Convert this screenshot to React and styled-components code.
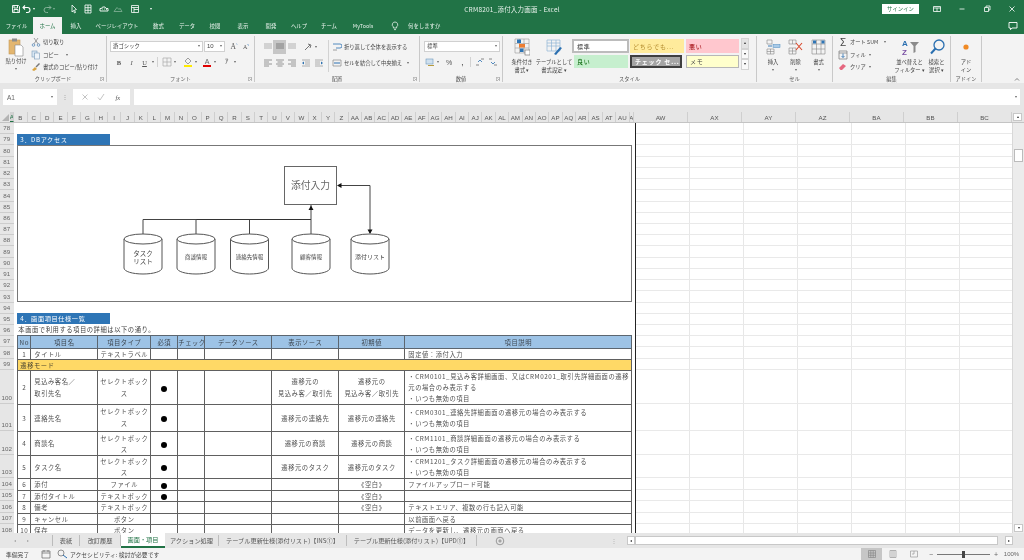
import React from "react";
import styled, { createGlobalStyle } from "styled-components";

const JP = `"Noto Sans CJK JP", "Noto Sans", sans-serif`;

const Global = createGlobalStyle`
  html, body { margin: 0; width: 1024px; height: 560px; overflow: hidden; background: #e6e6e6; }
  #root { width: 1024px; height: 560px; }
  * { box-sizing: border-box; }
`;

const Window = styled.div`
  width: 1024px; height: 560px; display: flex; flex-direction: column; overflow: hidden;
  font-family: ${JP}; color: #444; filter: blur(0.4px); background: #e6e6e6;
`;

/* Title bar */
const TitleBar = styled.header`
  height: 17px; background: #217346; color: #fff; display: grid; grid-template-columns: 1fr auto 1fr; align-items: center;
`;
const Qat = styled.div`display: flex; align-items: center; padding-left: 10px;`;
const QatSlot = styled.span`
  width: ${p => p.$w}px; display: flex; align-items: center; justify-content: center; opacity: ${p => p.$dim ? 0.45 : 1};
`;
const TitleText = styled.div`font-size: 6.5px; letter-spacing: 0.2px; color: #e8f2ec; white-space: nowrap;`;
const WinControls = styled.div`display: flex; justify-content: flex-end; align-items: center;`;
const SignIn = styled.div`
  width: 37px; height: 10px; background: #fff; color: #217346; font-size: 5.4px; display: flex; align-items: center; justify-content: center; margin-right: 5px;
`;
const WinBtn = styled.span`width: 25px; display: flex; justify-content: center; align-items: center;`;

/* Tabs */
const TabBar = styled.nav`height: 17px; background: #217346; display: flex; align-items: stretch; color: #e8f2ec; font-size: 5.4px;`;
const Tab = styled.div`
  width: ${p => p.$w}px; display: flex; align-items: center; justify-content: center; white-space: nowrap;
  background: ${p => p.$active ? "#f3f3f3" : "transparent"}; color: ${p => p.$active ? "#217346" : "inherit"};
`;
const TellMe = styled.div`display: flex; align-items: center; gap: 8px; padding-left: 9px;`;
const CommentSlot = styled.div`margin-left: auto; padding-right: 6px; display: flex; align-items: center;`;

/* Ribbon */
const Ribbon = styled.section`height: 49px; background: #f3f3f3; display: flex; font-size: 5.3px; color: #444; white-space: nowrap;`;
const Group = styled.div`
  width: ${p => p.$w}px; margin: 2px 0 1px; border-right: 1px solid #c9c9c9; display: grid; grid-template-rows: 1fr 7px; position: relative;
`;
const GroupBody = styled.div`display: flex; padding: ${p => p.$pad || "1px 0 0 4px"}; min-height: 0;`;
const GroupLabel = styled.div`font-size: 5.2px; text-align: center; line-height: 7px; color: #555;`;
const Launcher = styled.svg`position: absolute; right: 2px; bottom: 1px; width: 4px; height: 4px;`;
const Expand = styled.div`flex: 1; display: flex; align-items: flex-end; justify-content: flex-end; padding: 0 4px 2px 0;`;

const Caret = styled.i`
  display: inline-block; width: 0; height: 0; margin-left: ${p => p.$ml ?? 3}px; border: 1.8px solid transparent; border-top: 2.2px solid #666; border-bottom: 0; flex: none;
`;

const PasteCol = styled.div`width: 24px; display: flex; flex-direction: column; align-items: center; margin-right: 3px;`;
const BigLabel = styled.div`line-height: 8px; text-align: center; margin-top: ${p => p.$mt ?? 1}px;`;
const SmallList = styled.div`display: flex; flex-direction: column; gap: ${p => p.$gap ?? 2}px;`;
const SmallRow = styled.div`height: 10.5px; display: flex; align-items: center; gap: ${p => p.$gap ?? 2}px;`;

const Stack = styled.div`display: flex; flex-direction: column; gap: ${p => p.$gap ?? 4}px; padding-top: ${p => p.$top ?? 4}px;`;
const Line = styled.div`display: flex; align-items: center; height: ${p => p.$h ?? 12}px;`;
const Field = styled.div`
  width: ${p => p.$w}px; height: 11px; background: #fff; border: 1px solid #d0d0d0; display: flex; align-items: center; justify-content: space-between; padding: 0 2px 0 2px; margin-right: ${p => p.$mr ?? 1}px; font-size: 5.4px;
`;
const Glyph = styled.span`
  width: ${p => p.$w ?? 12}px; text-align: center; font-family: "Liberation Serif", serif; font-size: ${p => p.$s ?? 6.5}px; font-weight: ${p => p.$bold ? 700 : 400};
  font-style: ${p => p.$it ? "italic" : "normal"}; text-decoration: ${p => p.$u ? "underline" : "none"}; color: #555; flex: none;
`;
const IconBtn = styled.span`
  width: ${p => p.$w ?? 11}px; height: ${p => p.$h ?? 12}px; display: flex; align-items: center; justify-content: center; flex: none; background: ${p => p.$on ? "#c6c6c6" : "transparent"};
`;
const VRule = styled.span`width: 1px; height: ${p => p.$h ?? 30}px; background: #d2d2d2; margin: 0 ${p => p.$m ?? 4}px; flex: none;`;

const BigBtn = styled.div`width: ${p => p.$w}px; display: flex; flex-direction: column; align-items: center; flex: none;`;
const IconBox = styled.div`height: 20px; display: flex; align-items: center; justify-content: center;`;

const Gallery = styled.div`
  display: grid; grid-template-columns: 57px 56px 55px; grid-auto-rows: 14px; margin-left: 1px; padding-top: 2px; row-gap: 1px; font-size: 6px;
`;
const Style = styled.div`
  margin: ${p => p.$m || "0 1px"}; display: flex; align-items: center; padding-left: 3px; letter-spacing: 0.8px; overflow: hidden;
  background: ${p => p.$bg}; color: ${p => p.$c}; border: ${p => p.$b || "0"}; font-weight: ${p => p.$bold ? 700 : 400};
`;
const GalleryArrows = styled.div`display: flex; flex-direction: column; margin-left: 1px; padding-top: 1px; width: 8px;`;
const ArrowBtn = styled.div`flex: none; height: 10.5px; background: ${p => p.$dim ? "#e4e4e4" : "#fafafa"}; border: 1px solid #d4d4d4; display: flex; justify-content: center; align-items: center;`;

/* Formula bar */
const GapBar = styled.div`height: ${p => p.$h}px; background: #e6e6e6;`;
const FormulaBar = styled.div`height: 17px; background: #e6e6e6; display: flex; padding: 0 4px 1px 3px;`;
const NameBox = styled.div`
  width: 54px; background: #fff; display: flex; align-items: center; justify-content: space-between; padding: 0 4px; font-family: "Liberation Sans", sans-serif; font-size: 6.5px; color: #666;
`;
const Dots = styled.span`width: 16px; text-align: center; color: #999; font-size: 6px; line-height: 16px;`;
const FxBox = styled.div`width: 57px; background: #fff; display: flex; align-items: center; justify-content: space-around; padding: 0 4px; margin-right: 4px;`;
const FormulaInput = styled.div`flex: 1; background: #fff; display: flex; justify-content: flex-end; align-items: center; padding-right: 3px;`;

/* Column headers */
const ColHeaders = styled.div`height: 11px; display: flex; background: #e6e6e6; font-family: "Liberation Sans", sans-serif; font-size: 6.2px; color: #555; border-bottom: 1px solid #c4c4c4;`;
const Corner = styled.div`width: 13.5px; position: relative;`;
const CornerMark = styled.svg`position: absolute; right: 1px; bottom: 1px; width: 7px; height: 7px;`;
const ColCell = styled.div`
  width: ${p => p.$w}px; flex: none; display: flex; align-items: center; justify-content: center; overflow: hidden; border-right: 1px solid #cfcfcf;
  background: ${p => p.$on ? "#d2d2d2" : "transparent"}; color: ${p => p.$on ? "#217346" : "inherit"}; border-bottom: ${p => p.$on ? "1px solid #217346" : "0"};
`;
const ColFill = styled.div`flex: 1; display: flex; justify-content: center; align-items: flex-start;`;

/* Sheet */
const SheetBody = styled.main`height: 410px; display: flex; overflow: hidden; background: #fff;`;
const RowHeaders = styled.div`width: 13.5px; flex: none; background: #e6e6e6; display: flex; flex-direction: column;`;
const RowHead = styled.div`
  height: ${p => p.$h}px; flex: none; display: flex; justify-content: center; align-items: flex-end; line-height: 10px; border-bottom: 1px solid #cdcdcd; font-family: "Liberation Sans", sans-serif; font-size: 6.2px; color: #666;
`;
const Content = styled.div`width: 621.5px; flex: none; padding-left: 3.8px; background: #fff; display: flex; flex-direction: column;`;
const Spacer = styled.div`height: ${p => p.$h}px; flex: none;`;
const SectionTitle = styled.div`
  width: 93px; height: 11.2px; flex: none; background: #2e75b6; color: #fff; font-size: 6.2px; letter-spacing: 0.6px; padding-left: 3px; line-height: 11.2px;
`;
const DiagramBox = styled.div`width: 615px; height: 157px; flex: none; border: 1px solid #777; background: #fff;`;
const Diagram = styled.svg`display: block; width: 613px; height: 155px; font-family: ${JP};`;
const Note = styled.div`height: 11.2px; flex: none; font-size: 6.3px; letter-spacing: 0.55px; line-height: 11.2px; padding-left: 1px; color: #444; white-space: nowrap;`;

const Table = styled.table`
  width: 614px; table-layout: fixed; border-collapse: collapse; font-size: 6.3px; letter-spacing: 0.55px; color: #505050; flex: none;
`;
const Col = styled.col`width: ${p => p.$w}px;`;
const Tr = styled.tr`height: ${p => p.$h}px;`;
const Th = styled.th`
  background: #9dc3e6; border: 1px solid #5c6670; font-weight: 400; color: #3d4650; padding: 0; line-height: 9px; overflow: hidden; white-space: nowrap; text-align: center;
`;
const Td = styled.td`
  border: 1px solid #606060; padding: 0 ${p => p.$left ? "2px" : 0} 0 ${p => p.$left ? "3px" : 0}; line-height: ${p => p.$lh ?? 9}px; overflow: hidden; white-space: nowrap;
  text-align: ${p => p.$left ? "left" : "center"}; vertical-align: middle;
`;
const Band = styled.td`background: #ffd966; border: 1px solid #606060; padding: 0 0 0 2px; line-height: 9px; color: #4a4430;`;
const Dot = styled.span`display: inline-block; width: 6px; height: 6px; border-radius: 50%; background: #000; vertical-align: middle;`;

const RightPanel = styled.div`
  flex: 1; border-left: 1.5px solid #222; background: #fff repeating-linear-gradient(90deg, transparent 0 53px, #e7e7e7 53px 54px); display: flex; flex-direction: column;
`;
const GridRow = styled.div`height: ${p => p.$h}px; flex: none; border-bottom: 1px solid #e9e9e9;`;

const VScroll = styled.aside`width: 12px; flex: none; background: #ececec; position: relative; border-left: 1px solid #d8d8d8;`;
const ScrollThumb = styled.div`position: absolute; left: 1px; right: 1px; top: 26px; height: 13px; background: #fff; border: 1px solid #bbb;`;
const ScrollBtn = styled.div`
  position: absolute; left: 1px; width: 9px; height: 8px; background: #fff; border: 1px solid #c8c8c8; display: flex; align-items: center; justify-content: center;
  ${p => p.$bottom ? "bottom: 1px;" : "top: 0;"}
`;
const ColScrollCap = styled.div`width: 12px; flex: none; position: relative; background: #e6e6e6;`;
const Arrow = styled.i`
  width: 0; height: 0; display: block; border: 1.6px solid transparent;
  ${p => ({ up: "border-bottom: 2px solid #333; border-top: 0;", down: "border-top: 2px solid #333; border-bottom: 0;", left: "border-right: 2px solid #333; border-left: 0;", right: "border-left: 2px solid #333; border-right: 0;" }[p.$d])}
`;

/* Sheet tabs */
const SheetTabs = styled.div`height: 15px; background: #e6e6e6; display: flex; align-items: stretch; font-size: 6.2px; color: #555; white-space: nowrap;`;
const TabNav = styled.div`width: 53px; flex: none; display: flex; align-items: center; gap: 11px; padding-left: 14px; border-right: 1px solid #bbb; margin: 2px 0;`;
const SheetTab = styled.div`
  width: ${p => p.$w}px; flex: none; display: flex; align-items: center; justify-content: center; overflow: hidden;
  ${p => p.$active ? "background:#fff;color:#217346;border-bottom:2px solid #217346;" : "border-right: 1px solid #bdbdbd; margin: 2px 0;"}
`;
const AddSlot = styled.div`width: 46px; flex: none; display: flex; align-items: center; justify-content: center;`;
const HDots = styled.div`width: 104px; flex: none; display: flex; align-items: center; justify-content: center; padding-left: 78px; color: #aaa; font-size: 6px;`;
const HScroll = styled.div`flex: 1; display: flex; align-items: center; gap: 0; padding-right: 11px;`;
const HBtn = styled.div`width: 8px; height: 9px; flex: none; background: #fff; border: 1px solid #c8c8c8; display: flex; align-items: center; justify-content: center;`;
const HTrack = styled.div`flex: 1; height: 9px; background: #fff; border: 1px solid #c8c8c8;`;
const HGap = styled.div`width: 7px; flex: none;`;

/* Status */
const StatusBar = styled.footer`height: 12px; background: #f3f3f3; display: flex; align-items: center; font-size: 5.8px; color: #444; padding-left: 6px; white-space: nowrap;`;
const StatusText = styled.span`width: ${p => p.$w}px; flex: none;`;
const StatusRight = styled.div`margin-left: auto; display: flex; align-items: center; height: 100%;`;
const ViewBtn = styled.div`width: 21px; height: 100%; display: flex; align-items: center; justify-content: center; background: ${p => p.$on ? "#c6c6c6" : "transparent"};`;
const ZoomTrack = styled.div`width: 53px; height: 1px; background: #777; position: relative; margin: 0 3px;`;
const ZoomThumb = styled.div`position: absolute; left: 25px; top: -3px; width: 2.5px; height: 7px; background: #444;`;
const ZoomSign = styled.span`font-family: "Liberation Sans", sans-serif; font-size: 7px; color: #666; width: 6px; text-align: center;`;
const ZoomPct = styled.span`font-family: "Liberation Sans", sans-serif; font-size: 6px; color: #666; width: 25px; text-align: center;`;

/* Icons */
const S = ({ w = 10, h = 10, vb, children }) => <svg width={w} height={h} viewBox={vb || `0 0 ${w} ${h}`} fill="none">{children}</svg>;

const Align = ({ rows, c = "#8a8a8a" }) => (
  <S>{rows.map(([x, l], i) => <line key={i} x1={x} x2={x + l} y1={2 + i * 2} y2={2 + i * 2} stroke={c} strokeWidth="0.9" />)}</S>
);
const lines = {
  top: [[1, 8], [1, 8], [1, 8]],
  left: [[1, 8], [1, 5], [1, 8], [1, 5]],
  mid: [[1, 8], [2.5, 5], [1, 8], [2.5, 5]],
  right: [[1, 8], [4, 5], [1, 8], [4, 5]],
};
const Launch = () => <Launcher viewBox="0 0 4 4" fill="none"><path d="M.3 .3h3.2v3.2M.3 .3v3.2h1.6M1.5 1.5l2 2" stroke="#777" strokeWidth=".5" /></Launcher>;

const rowHeights = [];
const rowLabels = [];
for (let i = 78; i <= 99; i++) { rowLabels.push(i); rowHeights.push(11.23); }
[[100, 34], [101, 27], [102, 24], [103, 23], [104, 12], [105, 11], [106, 12], [107, 11], [108, 12]].forEach(([n, h]) => { rowLabels.push(n); rowHeights.push(h); });

const colNames = [];
const alpha = "ABCDEFGHIJKLMNOPQRSTUVWXYZ";
for (let i = 1; i < 26; i++) colNames.push(alpha[i]);
for (let i = 0; i < 21; i++) colNames.push("A" + alpha[i]);

const cylinders = [
  { x: 143, t: ["タスク", "リスト"], fs: 6.5 },
  { x: 196, t: ["商談情報"], fs: 5.5 },
  { x: 249.5, t: ["連絡先情報"], fs: 5.5 },
  { x: 311, t: ["顧客情報"], fs: 5.5 },
  { x: 370, t: ["添付リスト"], fs: 6 },
];

const Cylinder = ({ x, t, fs }) => (
  <g>
    <path d={`M${x - 19} 240v29c0 3.5 8.5 6 19 6s19 -2.5 19 -6v-29`} stroke="#555" fill="#fff" />
    <ellipse cx={x} cy={240} rx={19} ry={5} stroke="#555" fill="#fff" />
    {t.map((s, i) => (
      <text key={i} x={x} y={t.length === 2 ? 256.5 + i * 8 : 260} textAnchor="middle" fontSize={fs} fill="#444">{s}</text>
    ))}
  </g>
);

const desc = (code) => <>・{code}の遷移元の場合のみ表示する<br />・いつも無効の項目</>;

const rightCols = ["AX", "AY", "AZ", "BA", "BB", "BC"];

export default function App() {
  return (
    <Window>
      <Global />
      <TitleBar>
        <Qat>
          <QatSlot $w={11}><S><path d="M1.5 1.5h6l1 1v6h-7z M3 1.5v2.5h3.5v-2.5 M3 8.5v-3h4v3" stroke="#fff" strokeWidth=".9" /></S></QatSlot>
          <QatSlot $w={14}><S><path d="M3 1.5L1 3.5l2 2M1 3.5h4.5a2.5 2.5 0 0 1 0 5H4" stroke="#fff" strokeWidth="1.1" /></S><Caret $ml={1} style={{ borderTopColor: "#fff" }} /></QatSlot>
          <QatSlot $w={6} />
          <QatSlot $w={15} $dim><S><path d="M7 1.5L9 3.5l-2 2M9 3.5H4.5a2.5 2.5 0 0 0 0 5H6" stroke="#fff" strokeWidth="1" /></S><Caret $ml={1} style={{ borderTopColor: "#fff" }} /></QatSlot>
          <QatSlot $w={12} />
          <QatSlot $w={11}><S><path d="M3 1l4.5 4.5L5.5 6l1 2.5-1 .5-1-2.5L3 8z" stroke="#fff" strokeWidth=".8" /></S></QatSlot>
          <QatSlot $w={17}><S><path d="M2 1h6v8H2zM2 3.7h6M2 6.3h6M5 1v8" stroke="#fff" strokeWidth=".8" /></S></QatSlot>
          <QatSlot $w={15}><S><path d="M1 7h8V4.5H7L6 3H3.5L2.5 4.5H1zM3 5h.8M5 5h.8M7 5.5h.8" stroke="#fff" strokeWidth=".9" /></S></QatSlot>
          <QatSlot $w={14} $dim><S><path d="M1 7.5l3-4 2 2 1-1.2 2 3.2z" stroke="#fff" strokeWidth=".8" /></S></QatSlot>
          <QatSlot $w={20}><S><path d="M1.5 1.5h7v7h-7zM1.5 3.5h7M4 3.5v5M4 5.5h4.5" stroke="#fff" strokeWidth=".8" /></S></QatSlot>
          <QatSlot $w={11}><Caret $ml={0} style={{ borderTopColor: "#fff" }} /></QatSlot>
        </Qat>
        <TitleText>CRM8201_添付入力画面 - Excel</TitleText>
        <WinControls>
          <SignIn>サインイン</SignIn>
          <WinBtn><S><path d="M1.5 2.5h7v5h-7zM1.5 4h7M5 4v3.5" stroke="#fff" strokeWidth=".8" /></S></WinBtn>
          <WinBtn><S><path d="M2.5 5h5" stroke="#fff" strokeWidth=".8" /></S></WinBtn>
          <WinBtn><S><path d="M2.5 3.5h4v4h-4zM4 3.5V2h4v4H6.5" stroke="#fff" strokeWidth=".8" /></S></WinBtn>
          <WinBtn><S><path d="M2.5 2.5l5 5M7.5 2.5l-5 5" stroke="#fff" strokeWidth=".8" /></S></WinBtn>
        </WinControls>
      </TitleBar>

      <TabBar>
        <Tab $w={33}>ファイル</Tab>
        <Tab $w={29} $active>ホーム</Tab>
        <Tab $w={28}>挿入</Tab>
        <Tab $w={54}>ページレイアウト</Tab>
        <Tab $w={29}>数式</Tab>
        <Tab $w={28}>データ</Tab>
        <Tab $w={28}>校閲</Tab>
        <Tab $w={28}>表示</Tab>
        <Tab $w={28}>開発</Tab>
        <Tab $w={28}>ヘルプ</Tab>
        <Tab $w={32}>チーム</Tab>
        <Tab $w={36}>MyTools</Tab>
        <TellMe>
          <S><path d="M5 1a2.7 2.7 0 0 0-1.6 4.9V7h3.2V5.9A2.7 2.7 0 0 0 5 1zM4 8.6h2" stroke="#e8f2ec" strokeWidth=".8" /></S>
          何をしますか
        </TellMe>
        <CommentSlot><S><path d="M1 1.5h8v5.5H4L2.5 8.7V7H1z" stroke="#fff" strokeWidth=".9" /></S></CommentSlot>
      </TabBar>

      <Ribbon>
        <Group $w={107}>
          <GroupBody>
            <PasteCol>
              <S w={18} h={20}><rect x="2" y="3" width="11" height="14" fill="#e3b66f" stroke="#c59b58" strokeWidth=".6" /><rect x="5" y="1.5" width="5" height="3" fill="#8d8d8d" /><path d="M8 8h6l2 2v9H8z" fill="#fff" stroke="#888" strokeWidth=".6" /></S>
              <BigLabel $mt={0}>貼り付け</BigLabel>
              <Caret $ml={0} style={{ marginTop: 3 }} />
            </PasteCol>
            <SmallList>
              <SmallRow><S><circle cx="2.5" cy="8" r="1.3" stroke="#4a7fb5" strokeWidth=".7" /><circle cx="7.5" cy="8" r="1.3" stroke="#4a7fb5" strokeWidth=".7" /><path d="M3 6.8L7 1M7 6.8L3 1" stroke="#777" strokeWidth=".7" /></S>切り取り</SmallRow>
              <SmallRow><S><rect x="1" y="1" width="5" height="6" fill="#d7e6f3" stroke="#7a9cba" strokeWidth=".6" /><rect x="3.5" y="3" width="5" height="6" fill="#eef4fa" stroke="#7a9cba" strokeWidth=".6" /></S>コピー<Caret $ml={5} /></SmallRow>
              <SmallRow><S><path d="M1 8l3-3 2 2-3 2z" fill="#d9a441" /><path d="M4.5 4.5L8 1l1 1-3.5 3.5z" fill="#777" /></S>書式のコピー/貼り付け</SmallRow>
            </SmallList>
          </GroupBody>
          <GroupLabel>クリップボード</GroupLabel>
          <Launch />
        </Group>

        <Group $w={148}>
          <GroupBody $pad="0 0 0 3px">
            <Stack>
              <Line>
                <Field $w={93}>游ゴシック<Caret /></Field>
                <Field $w={21} $mr={3} style={{ fontFamily: "Liberation Sans", fontSize: 6 }}>10<Caret /></Field>
                <Glyph $s={7.5} $w={12}>A<sup style={{ fontSize: 3, color: "#2a6fb0" }}>^</sup></Glyph>
                <Glyph $s={6} $w={12}>A<sup style={{ fontSize: 3, color: "#2a6fb0" }}>v</sup></Glyph>
              </Line>
              <Line>
                <Glyph $w={3} />
                <Glyph $bold $w={12}>B</Glyph>
                <Glyph $it $w={13}>I</Glyph>
                <Glyph $u $w={13}>U</Glyph><Caret $ml={1} />
                <VRule $h={10} $m={3} />
                <IconBtn><S><path d="M1 1h8v8H1zM1 5h8M5 1v8" stroke="#aaa" strokeWidth=".7" /></S></IconBtn>
                <Caret $ml={2} />
                <IconBtn $w={13} style={{ marginLeft: 5 }}><S><path d="M5 1l3 3-3 3-3-3z" stroke="#777" strokeWidth=".7" /><rect x="1" y="8" width="8" height="2" fill="#ffeb00" /></S></IconBtn>
                <Caret $ml={1} />
                <IconBtn $w={13} style={{ marginLeft: 3 }}><S><text x="5" y="6.5" textAnchor="middle" fontSize="7" fill="#666" fontFamily="Liberation Sans">A</text><rect x="1" y="8" width="8" height="2" fill="#e00000" /></S></IconBtn>
                <Caret $ml={1} />
                <IconBtn $w={12} style={{ marginLeft: 5 }}><S><text x="5" y="7" textAnchor="middle" fontSize="6.5" fill="#666" fontFamily="Liberation Sans">ｱ</text></S></IconBtn>
                <Caret $ml={1} />
              </Line>
            </Stack>
          </GroupBody>
          <GroupLabel>フォント</GroupLabel>
          <Launch />
        </Group>

        <Group $w={165}>
          <GroupBody $pad="0 0 0 7px">
            <Stack $gap={2} $top={4}>
              <Line $h={14}>
                <IconBtn $w={11}><Align rows={lines.top} c="#aaa" /></IconBtn>
                <IconBtn $w={13} $h={14} $on><Align rows={lines.top} c="#777" /></IconBtn>
                <IconBtn $w={11}><Align rows={lines.top} c="#aaa" /></IconBtn>
                <IconBtn $w={15} style={{ marginLeft: 3 }}><S><path d="M2 8L7 3M5 2l3 1-1 3" stroke="#666" strokeWidth=".9" /></S></IconBtn>
                <Caret $ml={0} />
              </Line>
              <Line $h={14}>
                <IconBtn $w={11}><Align rows={lines.left} /></IconBtn>
                <IconBtn $w={13} $h={14}><Align rows={lines.mid} /></IconBtn>
                <IconBtn $w={11}><Align rows={lines.right} /></IconBtn>
                <IconBtn $w={12} style={{ marginLeft: 3 }}><S><path d="M1 2h8M4 4h5M4 6h5M1 8h8" stroke="#999" strokeWidth=".8" /><path d="M3 3.5L1 5l2 1.5z" fill="#2a6fb0" /></S></IconBtn>
                <IconBtn $w={13}><S><path d="M1 2h8M1 4h5M1 6h5M1 8h8" stroke="#999" strokeWidth=".8" /><path d="M7 3.5L9 5 7 6.5z" fill="#2a6fb0" /></S></IconBtn>
              </Line>
            </Stack>
            <VRule $h={32} $m={3} style={{ marginTop: 4 }} />
            <Stack $gap={5} $top={5}>
              <Line $h={11}><S><path d="M1 2h7a2 2 0 0 1 0 4H4" stroke="#2a6fb0" strokeWidth=".8" /><path d="M1 8h4" stroke="#888" strokeWidth=".8" /></S><span style={{ marginLeft: 2 }}>折り返して全体を表示する</span></Line>
              <Line $h={11}><S><path d="M1 2h8v6H1z" stroke="#888" strokeWidth=".7" /><path d="M2 5h6" stroke="#2a6fb0" strokeWidth="1" /></S><span style={{ marginLeft: 2 }}>セルを結合して中央揃え</span><Caret $ml={5} /></Line>
            </Stack>
          </GroupBody>
          <GroupLabel>配置</GroupLabel>
          <Launch />
        </Group>

        <Group $w={83}>
          <GroupBody $pad="0 0 0 4px">
            <Stack>
              <Line><Field $w={76} $mr={0}>標準<Caret /></Field></Line>
              <Line>
                <IconBtn $w={12}><S><rect x="1" y="2" width="7" height="5" fill="#cfe0ef" stroke="#6f99bd" strokeWidth=".6" /><path d="M3 8.5h6" stroke="#b89b3e" strokeWidth="1" /></S></IconBtn>
                <Caret $ml={1} />
                <Glyph $w={16} $s={7} style={{ fontFamily: "Liberation Sans", marginLeft: 2 }}>%</Glyph>
                <Glyph $w={11} $bold style={{ fontFamily: "Liberation Sans" }}>,</Glyph>
                <VRule $h={10} $m={2} />
                <IconBtn $w={13}><S><path d="M1 8h3M6 2h3" stroke="#888" strokeWidth="1" /><path d="M3 5l2-2 2 2" stroke="#2a6fb0" strokeWidth=".8" /></S></IconBtn>
                <IconBtn $w={13}><S><path d="M1 2h3M6 8h3" stroke="#888" strokeWidth="1" /><path d="M3 5l2 2 2-2" stroke="#2a6fb0" strokeWidth=".8" /></S></IconBtn>
              </Line>
            </Stack>
          </GroupBody>
          <GroupLabel>数値</GroupLabel>
          <Launch />
        </Group>

        <Group $w={254}>
          <GroupBody $pad="1px 0 0 4px">
            <BigBtn $w={30}>
              <IconBox>
                <S w={16} h={18}><path d="M1 1h14v14H1zM1 5.5h14M1 10h14M5.5 1v14M10 1v14" stroke="#999" strokeWidth=".6" /><rect x="3" y="1.5" width="4" height="3.5" fill="#2f75b5" /><rect x="5" y="6" width="6" height="3.5" fill="#ed7d31" /><rect x="6" y="10.5" width="3.5" height="3.5" fill="#2f75b5" /><rect x="11" y="12" width="5" height="5" fill="#fff" stroke="#666" strokeWidth=".6" /></S>
              </IconBox>
              <BigLabel $mt={1}>条件付き<br />書式 ▾</BigLabel>
            </BigBtn>
            <BigBtn $w={34}>
              <IconBox>
                <S w={16} h={18}><path d="M1 2h13v11H1zM1 5h13M1 8h13M5.5 2v11M10 2v11" stroke="#8fb4d6" strokeWidth=".7" /><path d="M8 16l6-7 2 1-6 7z" fill="#2a6fb0" /></S>
              </IconBox>
              <BigLabel $mt={1}>テーブルとして<br />書式設定 ▾</BigLabel>
            </BigBtn>
            <Gallery>
              <Style $bg="#fff" $c="#333" $b="2px solid #bcbcbc" $m="0">標準</Style>
              <Style $bg="#ffeb9c" $c="#b28a2c">どちらでも...</Style>
              <Style $bg="#ffc7ce" $c="#9c0006">悪い</Style>
              <Style $bg="#c6efce" $c="#006100" $m="1px 1px 0 2px">良い</Style>
              <Style $bg="#a5a5a5" $c="#fff" $b="2px solid #3f3f3f" $bold $m="1px 3px 0 1px">チェック セ...</Style>
              <Style $bg="#ffffcc" $c="#444" $b="1px solid #b7b7b7" $m="1px 1px 0 1px">メモ</Style>
            </Gallery>
            <GalleryArrows>
              <ArrowBtn $dim><Arrow $d="up" /></ArrowBtn>
              <ArrowBtn><Arrow $d="down" /></ArrowBtn>
              <ArrowBtn><Arrow $d="down" /></ArrowBtn>
            </GalleryArrows>
          </GroupBody>
          <GroupLabel>スタイル</GroupLabel>
        </Group>

        <Group $w={76}>
          <GroupBody $pad="1px 0 0 5px">
            <BigBtn $w={22}>
              <IconBox><S w={15} h={16}><path d="M1 1h5v4H1zM1 10h7v5H1zM4.5 10v5M1 12.5h7" stroke="#888" strokeWidth=".6" /><rect x="7" y="5.5" width="7" height="3" fill="#a9cbe8" stroke="#4a8ac0" strokeWidth=".5" /><path d="M6 7H2" stroke="#2a6fb0" strokeWidth=".9" /></S></IconBox>
              <BigLabel $mt={1}>挿入</BigLabel><Caret $ml={0} style={{ marginTop: 3 }} />
            </BigBtn>
            <BigBtn $w={23}>
              <IconBox><S w={16} h={16}><path d="M1 1h7v4H1zM1 9h7v6H1zM4.5 1v4M4.5 9v6M1 12h7" stroke="#888" strokeWidth=".6" /><path d="M8 4l6 7M14 4l-6 7" stroke="#d9472b" strokeWidth="1.1" /></S></IconBox>
              <BigLabel $mt={1}>削除</BigLabel><Caret $ml={0} style={{ marginTop: 3 }} />
            </BigBtn>
            <BigBtn $w={23}>
              <IconBox><S w={15} h={16}><path d="M1 1h13v14H1zM1 5h13M1 10h13M5.5 1v14M10 1v14" stroke="#888" strokeWidth=".6" /><rect x="2" y="1.5" width="3" height="3" fill="#2f75b5" /><rect x="10.5" y="1.5" width="3" height="3" fill="#2f75b5" /></S></IconBox>
              <BigLabel $mt={1}>書式</BigLabel><Caret $ml={0} style={{ marginTop: 3 }} />
            </BigBtn>
          </GroupBody>
          <GroupLabel>セル</GroupLabel>
        </Group>

        <Group $w={118}>
          <GroupBody $pad="1px 0 0 5px">
            <SmallList style={{ width: 56 }}>
              <SmallRow><Glyph $w={10} $s={10} style={{ fontFamily: "Liberation Sans", color: "#444" }}>Σ</Glyph>オート SUM<Caret $ml={4} /></SmallRow>
              <SmallRow><S><path d="M1 1h8v8H1zM1 3h8" stroke="#777" strokeWidth=".7" /><path d="M5 3.5v4M3.5 6L5 7.5 6.5 6" stroke="#2a6fb0" strokeWidth=".8" /></S>フィル<Caret $ml={1} /></SmallRow>
              <SmallRow><S><path d="M1 6l4-4 3 2-4 4H2.500z" fill="#e5677f" /></S>クリア<Caret $ml={1} /></SmallRow>
            </SmallList>
            <BigBtn $w={29} style={{ marginLeft: 1 }}>
              <IconBox><S w={20} h={18} ><text x="2" y="8" fontSize="8" fill="#2a6fb0" fontWeight="700" fontFamily="Liberation Sans">A</text><text x="2" y="16.5" fontSize="8" fill="#7a4fa3" fontWeight="700" fontFamily="Liberation Sans">Z</text><path d="M10 4h9l-3.500 4v6l-2 1V8z" fill="#8a8a8a" /></S></IconBox>
              <BigLabel $mt={1}>並べ替えと<br />フィルター ▾</BigLabel>
            </BigBtn>
            <BigBtn $w={25}>
              <IconBox><S w={16} h={18}><circle cx="10" cy="7" r="5" stroke="#2a6fb0" strokeWidth="1.3" /><path d="M6.5 10.5L2 15.5" stroke="#2a6fb0" strokeWidth="2" /></S></IconBox>
              <BigLabel $mt={1}>検索と<br />選択 ▾</BigLabel>
            </BigBtn>
          </GroupBody>
          <GroupLabel>編集</GroupLabel>
        </Group>

        <Group $w={31}>
          <GroupBody $pad="1px 0 0 0">
            <BigBtn $w={30}>
              <IconBox><S w={8} h={8}><circle cx="4" cy="4" r="2.6" fill="#f08a24" /></S></IconBox>
              <BigLabel $mt={1}>アド<br />イン</BigLabel>
            </BigBtn>
          </GroupBody>
          <GroupLabel>アドイン</GroupLabel>
        </Group>
        <Expand><S w={6} h={4}><path d="M1 3.5L3 1.5l2 2" stroke="#555" strokeWidth=".7" /></S></Expand>
      </Ribbon>

      <GapBar $h={6} />
      <FormulaBar>
        <NameBox>A1<Caret /></NameBox>
        <Dots>⋮</Dots>
        <FxBox>
          <S><path d="M2.5 2.5l5 5M7.5 2.5l-5 5" stroke="#bdbdbd" strokeWidth=".9" /></S>
          <S><path d="M2 5.5L4 8l4-6" stroke="#bdbdbd" strokeWidth=".9" /></S>
          <Glyph $it $s={6.5} $w={10}>fx</Glyph>
        </FxBox>
        <FormulaInput><Caret /></FormulaInput>
      </FormulaBar>
      <GapBar $h={6} />

      <ColHeaders>
        <Corner><CornerMark viewBox="0 0 7 7"><path d="M7 0v7H0z" fill="#b4b4b4" /></CornerMark></Corner>
        <ColCell $w={4} $on>A</ColCell>
        {colNames.map(c => <ColCell key={c} $w={13.375}>{c}</ColCell>)}
        <ColCell $w={4.5}>A</ColCell>
        <ColCell $w={54}>AW</ColCell>
        {rightCols.map(c => <ColCell key={c} $w={54}>{c}</ColCell>)}
        <ColFill />
        <ColScrollCap><ScrollBtn style={{ top: 1 }}><Arrow $d="up" /></ScrollBtn></ColScrollCap>
      </ColHeaders>

      <SheetBody>
        <RowHeaders>
          {rowLabels.map((n, i) => <RowHead key={n} $h={rowHeights[i]}>{n}</RowHead>)}
        </RowHeaders>
        <Content>
          <Spacer $h={11.23} />
          <SectionTitle>3．DBアクセス</SectionTitle>
          <DiagramBox>
            <Diagram viewBox="18 147 613 155">
              <path d="M143 235v-14.5H311M196 235v-14.5M249.5 235v-14.5M311 235v-29" stroke="#444" fill="none" />
              <path d="M196.5 220.5H311" stroke="#333" strokeWidth="1.2" />
              <path d="M311 206.5l-2.5 4.5h5z" fill="#111" />
              <path d="M339 186.5h31V234" stroke="#444" fill="none" />
              <path d="M337 186.5l4.5-2.5v5zM370 235l-2.5-4.5h5z" fill="#111" />
              <rect x="284.5" y="167.5" width="52" height="38" fill="#fff" stroke="#666" />
              <text x="310.5" y="190" textAnchor="middle" fontSize="9.8" fill="#666">添付入力</text>
              {cylinders.map(c => <Cylinder key={c.x} {...c} />)}
            </Diagram>
          </DiagramBox>
          <Spacer $h={10.5} />
          <SectionTitle>4．画面項目仕様一覧</SectionTitle>
          <Note>本画面で利用する項目の詳細は以下の通り。</Note>
          <Table>
            <colgroup>
              {[13, 67, 53, 27, 27, 67, 67, 66, 227].map((w, i) => <Col key={i} $w={w} />)}
            </colgroup>
            <thead>
              <Tr $h={13}>
                <Th>No</Th><Th>項目名</Th><Th>項目タイプ</Th><Th>必須</Th><Th>チェック</Th><Th>データソース</Th><Th>表示ソース</Th><Th>初期値</Th><Th>項目説明</Th>
              </Tr>
            </thead>
            <tbody>
              <Tr $h={11}>
                <Td>1</Td><Td $left>タイトル</Td><Td>テキストラベル</Td><Td /><Td /><Td /><Td /><Td /><Td $left>固定値：添付入力</Td>
              </Tr>
              <Tr $h={11}><Band colSpan={9}>遷移モード</Band></Tr>
              <Tr $h={34}>
                <Td>2</Td><Td $left $lh={12}>見込み客名／<br />取引先名</Td><Td $lh={12}>セレクトボック<br />ス</Td><Td><Dot /></Td><Td /><Td />
                <Td $lh={12}>遷移元の<br />見込み客／取引先</Td><Td $lh={12}>遷移元の<br />見込み客／取引先</Td>
                <Td $left $lh={11}>・CRM0101_見込み客詳細画面、又はCRM0201_取引先詳細画面の遷移<br />元の場合のみ表示する<br />・いつも無効の項目</Td>
              </Tr>
              <Tr $h={27}>
                <Td>3</Td><Td $left>連絡先名</Td><Td $lh={12}>セレクトボック<br />ス</Td><Td><Dot /></Td><Td /><Td />
                <Td>遷移元の連絡先</Td><Td>遷移元の連絡先</Td><Td $left $lh={11.5}>{desc("CRM0301_連絡先詳細画面")}</Td>
              </Tr>
              <Tr $h={24}>
                <Td>4</Td><Td $left>商談名</Td><Td $lh={11}>セレクトボック<br />ス</Td><Td><Dot /></Td><Td /><Td />
                <Td>遷移元の商談</Td><Td>遷移元の商談</Td><Td $left $lh={11}>{desc("CRM1101_商談詳細画面")}</Td>
              </Tr>
              <Tr $h={23}>
                <Td>5</Td><Td $left>タスク名</Td><Td $lh={11}>セレクトボック<br />ス</Td><Td><Dot /></Td><Td /><Td />
                <Td>遷移元のタスク</Td><Td>遷移元のタスク</Td><Td $left $lh={11}>{desc("CRM1201_タスク詳細画面")}</Td>
              </Tr>
              <Tr $h={12}>
                <Td>6</Td><Td $left>添付</Td><Td>ファイル</Td><Td><Dot /></Td><Td /><Td /><Td /><Td>《空白》</Td><Td $left>ファイルアップロード可能</Td>
              </Tr>
              <Tr $h={11}>
                <Td>7</Td><Td $left>添付タイトル</Td><Td>テキストボック</Td><Td><Dot /></Td><Td /><Td /><Td /><Td>《空白》</Td><Td $left />
              </Tr>
              <Tr $h={12}>
                <Td>8</Td><Td $left>備考</Td><Td>テキストボック</Td><Td /><Td /><Td /><Td /><Td>《空白》</Td><Td $left>テキストエリア、複数の行も記入可能</Td>
              </Tr>
              <Tr $h={11}>
                <Td>9</Td><Td $left>キャンセル</Td><Td>ボタン</Td><Td /><Td /><Td /><Td /><Td /><Td $left>以前画面へ戻る</Td>
              </Tr>
              <Tr $h={12}>
                <Td>10</Td><Td $left>保存</Td><Td>ボタン</Td><Td /><Td /><Td /><Td /><Td /><Td $left>データを更新し、遷移元の画面へ戻る</Td>
              </Tr>
            </tbody>
          </Table>
        </Content>
        <RightPanel>
          {rowHeights.map((h, i) => <GridRow key={i} $h={h} />)}
        </RightPanel>
        <VScroll>
          <ScrollThumb />
          <ScrollBtn $bottom><Arrow $d="down" /></ScrollBtn>
        </VScroll>
      </SheetBody>

      <SheetTabs>
        <TabNav><Arrow $d="left" style={{ opacity: .4 }} /><Arrow $d="right" style={{ opacity: .4 }} /></TabNav>
        <SheetTab $w={27}>表紙</SheetTab>
        <SheetTab $w={41}>改訂履歴</SheetTab>
        <SheetTab $w={44} $active>画面・項目</SheetTab>
        <SheetTab $w={54}>アクション処理</SheetTab>
        <SheetTab $w={128}>テーブル更新仕様(添付リスト)【INS①】</SheetTab>
        <SheetTab $w={130}>テーブル更新仕様(添付リスト)【UPD①】</SheetTab>
        <AddSlot><S><circle cx="5" cy="5" r="3.8" stroke="#777" strokeWidth=".7" /><path d="M3.2 5h3.6M5 3.2v3.6" stroke="#777" strokeWidth=".7" /></S></AddSlot>
        <HDots>⋮</HDots>
        <HScroll>
          <HBtn><Arrow $d="left" /></HBtn>
          <HTrack />
          <HGap />
          <HBtn><Arrow $d="right" /></HBtn>
        </HScroll>
      </SheetTabs>

      <StatusBar>
        <StatusText $w={35}>準備完了</StatusText>
        <S><path d="M1 2h8v7H1zM1 4h8M3 1v2M7 1v2" stroke="#666" strokeWidth=".7" /></S>
        <StatusText $w={6} />
        <S w={12} h={10}><circle cx="4" cy="4" r="3" stroke="#666" strokeWidth=".7" /><path d="M6 6l4 3" stroke="#2a6fb0" strokeWidth="1" /></S>
        <span style={{ marginLeft: 1 }}>アクセシビリティ: 検討が必要です</span>
        <StatusRight>
          <ViewBtn $on><S><path d="M1.5 1.5h7v7h-7zM1.5 4h7M1.5 6.3h7M3.8 1.5v7M6.2 1.5v7" stroke="#888" strokeWidth=".7" /></S></ViewBtn>
          <ViewBtn><S><path d="M2 1.5h6v7H2zM4 1.5v7M6 1.5v7" stroke="#999" strokeWidth=".7" /></S></ViewBtn>
          <ViewBtn><S><path d="M1.5 2h7v6h-7zM5 2v3H3" stroke="#999" strokeWidth=".7" /></S></ViewBtn>
          <ZoomSign style={{ marginLeft: 4 }}>−</ZoomSign>
          <ZoomTrack><ZoomThumb /></ZoomTrack>
          <ZoomSign>+</ZoomSign>
          <ZoomPct>100%</ZoomPct>
        </StatusRight>
      </StatusBar>
    </Window>
  );
}
